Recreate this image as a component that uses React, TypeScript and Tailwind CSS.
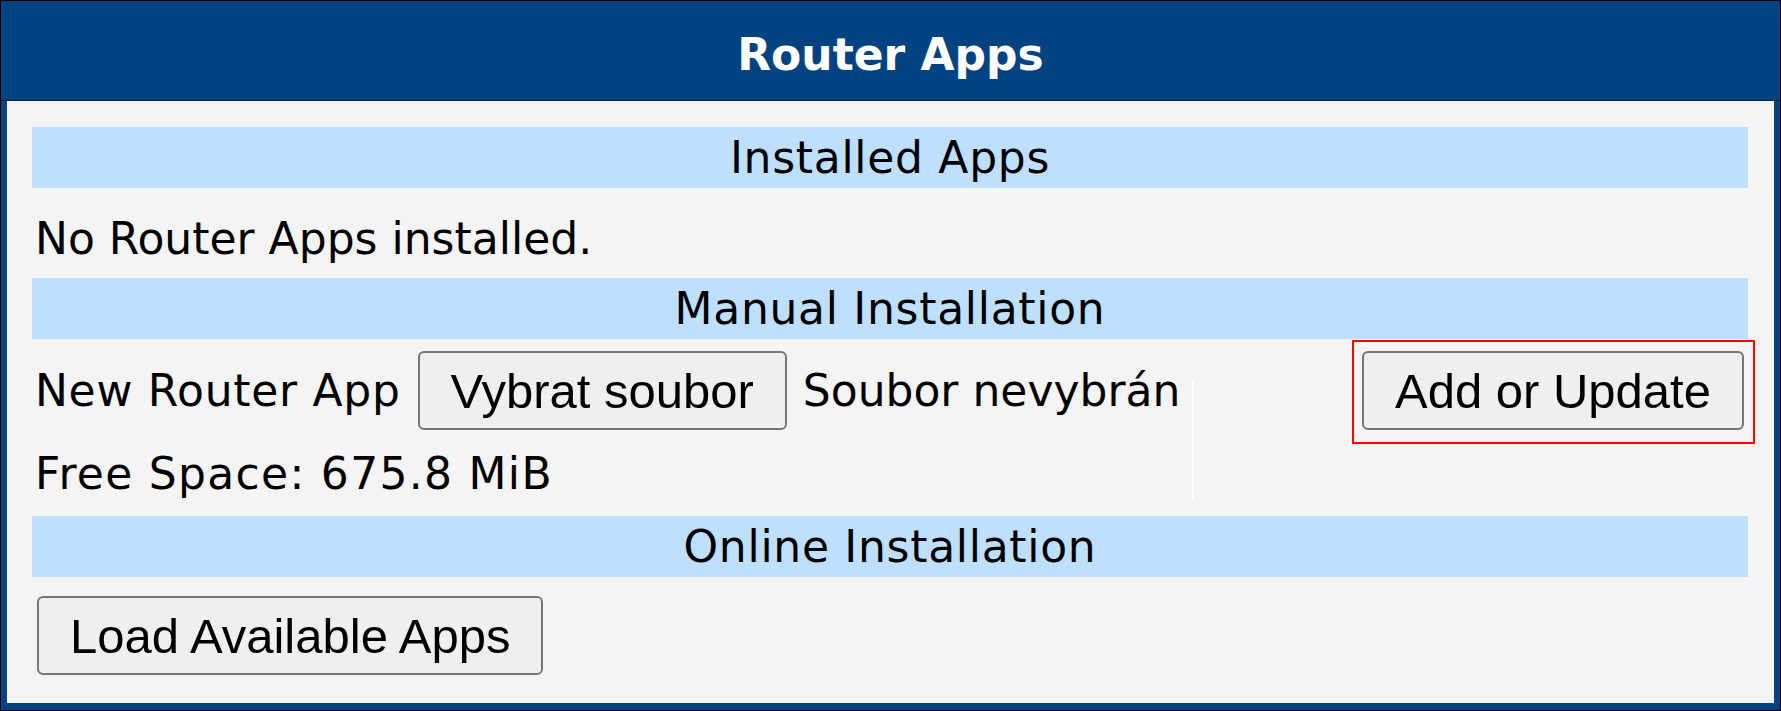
import React from 'react';

// Grey native-looking form button (file picker, submit buttons)
function FormButton({ children }: { children: React.ReactNode }) {
  return (
    <button
      type="button"
      className="flex h-[79px] items-center whitespace-nowrap rounded-[6px] border-2 border-[#767676] bg-[#efefef] px-[31px] font-['Liberation_Sans',Arial,sans-serif] text-[49px] leading-[56px] text-black"
    >
      {children}
    </button>
  );
}

// Light blue section caption
function SectionHeader({ title }: { title: string }) {
  return (
    <div className="flex h-[61px] items-center justify-center bg-[#bfdffe] text-[44px] leading-[51px] tracking-[0.7px]">
      {title}
    </div>
  );
}

export default function App() {
  return (
    <div className="h-[711px] w-[1781px] overflow-hidden border border-black bg-[#004380] font-['DejaVu_Sans',Verdana,sans-serif] text-black">
      <h1 className="border-b border-[#0c2238] pt-[28px] pb-[20px] text-center text-[44px] font-bold leading-[51px] text-white">
        Router Apps
      </h1>

      <div className="mx-[6px] bg-[#f4f4f4] pt-[26px] pr-[26px] pb-[28px] pl-[25px] text-[44px] leading-[51px]">
        {/* Installed */}
        <SectionHeader title="Installed Apps" />
        <p className="pt-[25px] pb-[14px] pl-[3px]">No Router Apps installed.</p>

        {/* Manual upload */}
        <SectionHeader title="Manual Installation" />
        <div className="flex items-start pb-[17px]">
          <div className="pl-[3px]">
            <div className="mt-[12px] flex items-center whitespace-nowrap">
              <span className="tracking-[0.7px]">New Router App</span>
              <span className="ml-[17px]">
                <FormButton>Vybrat soubor</FormButton>
              </span>
              <span className="ml-[16px]">Soubor nevybrán</span>
            </div>
            <p className="mt-[18px] tracking-[1.3px]">Free Space: 675.8 MiB</p>
          </div>
          <div className="ml-[12px] mt-[42px] h-[118px] w-[2px] bg-white" />
          <div className="flex-1" />
          <div className="-mr-[7px] mt-[1px] border-2 border-[#ff0000] pt-[9px] pr-[9px] pb-[12px] pl-[8px]">
            <FormButton>Add or Update</FormButton>
          </div>
        </div>

        {/* Online catalogue */}
        <SectionHeader title="Online Installation" />
        <div className="mt-[19px] flex pl-[5px]">
          <FormButton>Load Available Apps</FormButton>
        </div>
      </div>
    </div>
  );
}
